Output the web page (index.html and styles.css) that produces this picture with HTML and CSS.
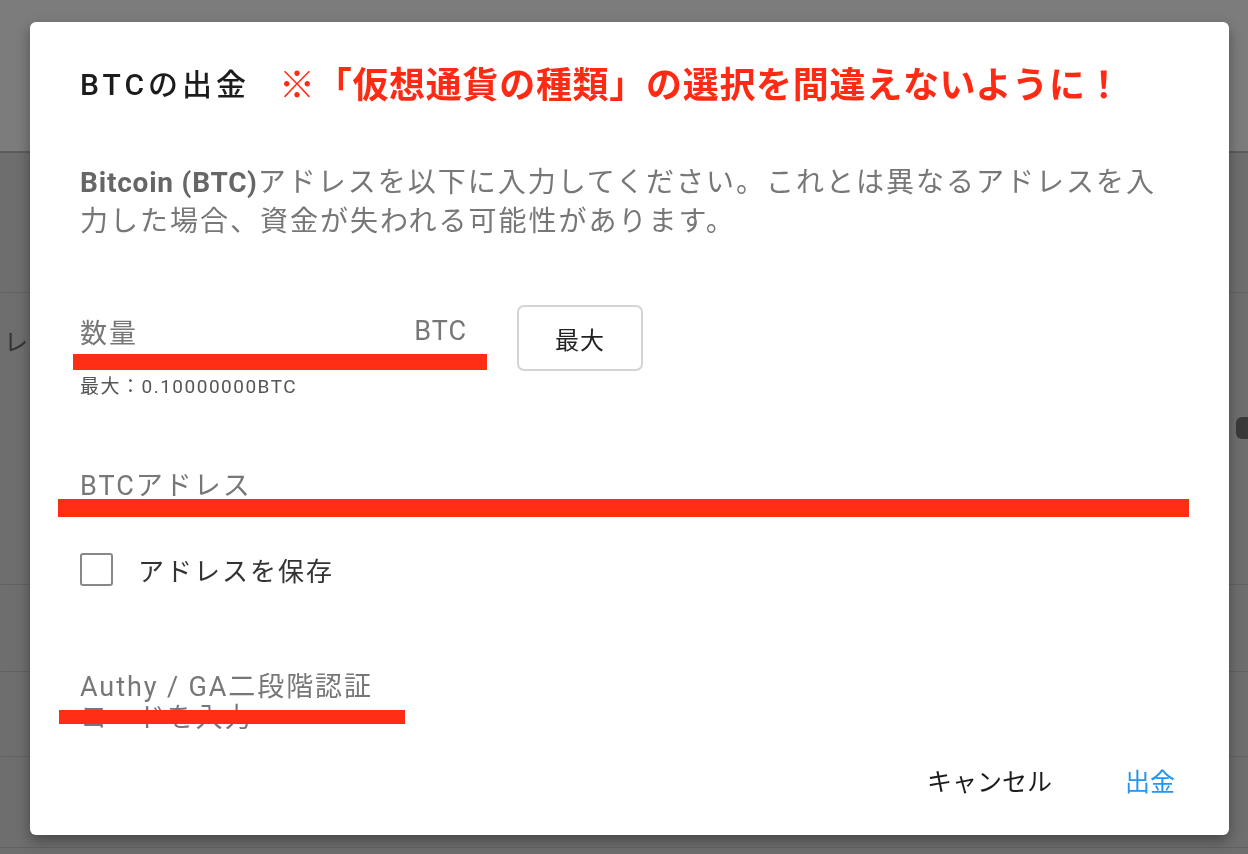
FILE: index.html
```html
<!DOCTYPE html>
<html lang="ja">
<head>
  <meta charset="UTF-8" />
  <title>BTCの出金</title>
  <link rel="stylesheet" href="styles.css">
</head>
<body>

<div class="page">
  <div class="page-head"></div>
  <div class="page-row row-a"></div>
  <div class="page-row row-b">
    <span class="behind-text">レ</span>
    <span class="behind-icon"></span>
  </div>
  <div class="page-row row-c"></div>
  <div class="page-row row-d"></div>
  <div class="page-row row-e"></div>
</div>

<div class="dialog">
  <div class="dialog-head">
    <h2 class="dialog-title">BTCの出金</h2>
    <span class="note">※「仮想通貨の種類」の選択を間違えないように！</span>
  </div>

  <p class="desc"><b>Bitcoin (BTC)</b>アドレスを以下に入力してください。これとは異なるアドレスを入力した場合、資金が失われる可能性があります。</p>

  <div class="amount-row">
    <div class="field amount-field">
      <div class="field-line">
        <span class="field-label">数量</span>
        <span class="unit">BTC</span>
      </div>
      <div class="mark mark-amount"></div>
      <div class="helper">最大：0.10000000BTC</div>
    </div>
    <button class="max-btn">最大</button>
  </div>

  <div class="field address-field">
    <div class="field-line">
      <span class="field-label">BTCアドレス</span>
    </div>
    <div class="mark mark-address"></div>
  </div>

  <label class="check-row">
    <span class="check-box"></span>
    <span class="check-label">アドレスを保存</span>
  </label>

  <div class="field code-field">
    <div class="code-label">Authy / GA二段階認証コードを入力</div>
    <div class="mark mark-code"></div>
  </div>

  <div class="actions">
    <button class="text-btn">キャンセル</button>
    <button class="text-btn primary">出金</button>
  </div>
</div>

</body>
</html>
```

FILE: styles.css
```css
body { margin: 0; font-family: Roboto, "Noto Sans CJK JP", sans-serif; background: #6e6e6e; overflow: hidden; }

/* page behind the overlay */
.page { height: 854px; }
.page-head { height: 151px; background: #7c7c7c; border-bottom: 2px solid #5c5c5c; }
.page-row { border-bottom: 1px solid #616161; }
.row-a { height: 139px; }
.row-b { height: 291px; display: flex; justify-content: space-between; align-items: flex-start; }
.row-c { height: 86px; }
.row-d { height: 84px; }
.row-e { height: 90px; }
.behind-text { margin: 30px 0 0 4px; font-size: 24px; color: #333; }
.behind-icon { width: 12px; height: 22px; margin-top: 124px; background: #3a3a3a; border-radius: 6px 0 0 6px; }

/* dialog */
.dialog {
  position: fixed; left: 30px; top: 22px; width: 1199px; height: 813px;
  box-sizing: border-box; padding: 35px 54px 0 50px;
  background: #fff; border-radius: 6px;
  box-shadow: 0 6px 14px rgba(0, 0, 0, 0.35);
}
.dialog-head { display: flex; align-items: center; height: 50px; }
.dialog-title { margin: 0; font-size: 30px; font-weight: 500; letter-spacing: 4px; color: #1c1c1c; }
.note { margin-left: 29px; font-size: 36px; font-weight: bold; letter-spacing: 0.7px; color: #ff2a14; }

.desc { margin: 56px 0 0; font-size: 28px; line-height: 39px; letter-spacing: 2px; color: #777; }
.desc b { color: #666; letter-spacing: 0.8px; }

.field { position: relative; }
.field-line { display: flex; justify-content: space-between; align-items: center; }
.field-label, .unit { font-size: 27px; letter-spacing: 2px; color: #777; }
.unit { letter-spacing: 1px; }
.mark { background: #ff2d14; }

.amount-row { display: flex; align-items: flex-start; gap: 30px; margin-top: 64px; }
.amount-field { width: 387px; padding: 6px 20px 0 0; }
.amount-field .field-line { height: 40px; }
.mark-amount { height: 16px; width: 414px; margin: 3px 0 0 -7px; }
.helper { margin-top: 5px; font-size: 19px; line-height: 24px; letter-spacing: 1.5px; color: #555; }
.max-btn {
  width: 126px; height: 66px; background: #fff; border: 2px solid #d4d4d4; border-radius: 7px;
  font-family: inherit; font-size: 24px; letter-spacing: 1px; color: #222;
}

.address-field { margin-top: 68px; }
.address-field .field-line { height: 32px; }
.mark-address { height: 18px; width: 1131px; margin-left: -22px; }

.check-row { display: flex; align-items: center; gap: 25px; margin-top: 36px; height: 33px; }
.check-box { width: 29px; height: 29px; border: 2px solid #888; border-radius: 3px; }
.check-label { font-size: 26px; letter-spacing: 2px; color: #333; }

.code-field { margin-top: 86px; }
.code-label { width: 305px; height: 57px; overflow: hidden; font-size: 27px; line-height: 31px; letter-spacing: 1.9px; color: #777; }
.mark-code { position: absolute; left: -21px; top: 38px; width: 346px; height: 14px; }

.actions { display: flex; justify-content: flex-end; gap: 73px; margin-top: 34px; }
.text-btn { padding: 0; background: none; border: none; font-family: inherit; font-size: 25px; line-height: 40px; color: #1c1c1c; }
.text-btn.primary { color: #2196f3; }
```
